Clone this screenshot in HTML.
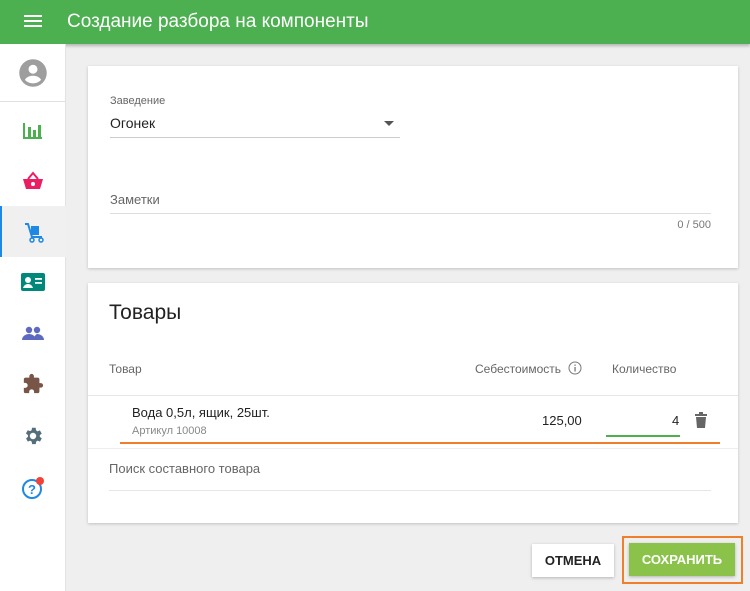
<!DOCTYPE html>
<html><head><meta charset="utf-8"><style>
*{box-sizing:border-box;margin:0;padding:0}
body{width:750px;height:591px;overflow:hidden;background:#efefef;font-family:"Liberation Sans",sans-serif;position:relative;color:#222}
.hdr{position:absolute;left:0;top:0;width:750px;height:44px;background:#4caf50;box-shadow:0 2px 3px rgba(0,0,0,.25)}
.hdr .t{position:absolute;left:67px;top:11px;color:#fff;font-size:19px}
.side{position:absolute;left:0;top:44px;width:66px;height:547px;background:#fff;border-right:1px solid #e2e2e2}
.ic{position:absolute;left:0;width:66px;display:flex;justify-content:center;align-items:center}
.card{position:absolute;left:88px;width:650px;background:#fff;box-shadow:0 1px 3px rgba(0,0,0,.2)}
.abs{position:absolute}
.s{font-size:13px;color:#666}
</style></head><body>
<div class="hdr">
<svg class="abs" style="left:24px;top:14px" width="18" height="14"><rect y="1" width="18" height="2" fill="#fff"/><rect y="6" width="18" height="2" fill="#fff"/><rect y="11" width="18" height="2" fill="#fff"/></svg>
<div class="t">Создание разбора на компоненты</div></div>
<div class="side">
<div class="ic" style="top:0;height:58px;border-bottom:1px solid #e0e0e0"><svg width="30" height="30" viewBox="0 0 24 24"><circle cx="12" cy="12" r="11" fill="#9e9e9e"/><circle cx="12" cy="9" r="3.6" fill="#fff"/><path d="M5.5 17.5c1.5-2.5 4-3.3 6.5-3.3s5 .8 6.5 3.3a9 9 0 0 1-13 0z" fill="#fff"/></svg></div>
<div class="ic" style="top:62px;height:48px"><svg width="20" height="18"><path d="M1 2v15h18" stroke="#4caf50" stroke-width="2" fill="none"/><rect x="5" y="6" width="3" height="10" fill="#4caf50"/><rect x="10" y="9" width="3" height="7" fill="#4caf50"/><rect x="15" y="4" width="3" height="12" fill="#4caf50"/></svg></div>
<div class="ic" style="top:113px;height:48px"><svg width="22" height="20" viewBox="0 0 22 20"><path d="M6 8l5-6 5 6" stroke="#e91e63" stroke-width="2" fill="none"/><path d="M1 8h20l-3 10H4z" fill="#e91e63"/><circle cx="11" cy="13" r="2" fill="#fff"/></svg></div>
<div class="ic" style="top:162px;height:51px;background:#f0f0f0;border-left:2px solid #1e88e5"><svg width="22" height="22" viewBox="0 0 22 22"><path d="M2 3h3l4 13h10" stroke="#1e88e5" stroke-width="2" fill="none"/><rect x="8" y="5" width="8" height="9" fill="#1e88e5"/><circle cx="9" cy="19" r="2" stroke="#1e88e5" fill="none" stroke-width="1.5"/><circle cx="18" cy="19" r="2" stroke="#1e88e5" fill="none" stroke-width="1.5"/></svg></div>
<div class="ic" style="top:214px;height:48px"><svg width="24" height="18"><rect width="24" height="18" rx="2" fill="#00897b"/><circle cx="7" cy="7" r="3" fill="#fff"/><path d="M2 15c1-3 3-4 5-4s4 1 5 4z" fill="#fff"/><rect x="14" y="5" width="7" height="1.8" fill="#fff"/><rect x="14" y="9" width="7" height="1.8" fill="#fff"/></svg></div>
<div class="ic" style="top:265px;height:48px"><svg width="22" height="14"><circle cx="7" cy="4" r="3.2" fill="#5c6bc0"/><circle cx="15" cy="4" r="3.2" fill="#5c6bc0"/><path d="M0 14c0-4 4-6 7-6s7 2 7 6z" fill="#5c6bc0"/><path d="M12 14c0-3 1-5 3-6 3 0 7 2 7 6z" fill="#5c6bc0"/></svg></div>
<div class="ic" style="top:316px;height:48px"><svg width="22" height="22" viewBox="0 0 24 24"><path d="M20.5 11H19V7a2 2 0 0 0-2-2h-4V3.5a2.5 2.5 0 0 0-5 0V5H4a2 2 0 0 0-2 2v3.8h1.5a2.7 2.7 0 0 1 0 5.4H2V20a2 2 0 0 0 2 2h3.8v-1.5a2.7 2.7 0 0 1 5.4 0V22H17a2 2 0 0 0 2-2v-4h1.5a2.5 2.5 0 0 0 0-5z" fill="#795548"/></svg></div>
<div class="ic" style="top:368px;height:48px"><svg width="22" height="22" viewBox="0 0 24 24"><path d="M19.4 13a7.5 7.5 0 0 0 0-2l2.1-1.6-2-3.5-2.5 1a7.3 7.3 0 0 0-1.7-1L14.9 3h-4l-.4 2.7a7.3 7.3 0 0 0-1.7 1l-2.5-1-2 3.5L6.5 11a7.5 7.5 0 0 0 0 2l-2.1 1.6 2 3.5 2.5-1c.5.4 1.1.7 1.7 1l.4 2.7h4l.4-2.7c.6-.3 1.2-.6 1.7-1l2.5 1 2-3.5zM12 15.5a3.5 3.5 0 1 1 0-7 3.5 3.5 0 0 1 0 7z" fill="#546e7a"/></svg></div>
<div class="ic" style="top:420px;height:48px"><svg width="26" height="26" viewBox="0 0 26 26"><circle cx="12" cy="14" r="9" stroke="#1e88e5" stroke-width="2" fill="none"/><text x="12" y="19" font-size="13" font-weight="bold" fill="#1e88e5" text-anchor="middle" font-family="Liberation Sans">?</text><circle cx="20" cy="6" r="4" fill="#f44336"/></svg></div>
</div>
<div class="card" style="top:66px;height:202px">
<div class="abs" style="left:22px;top:29px;font-size:11px;color:#666">Заведение</div>
<div class="abs" style="left:22px;top:49px;font-size:14px">Огонек</div>
<div class="abs" style="left:296px;top:55px;width:0;height:0;border-left:5px solid transparent;border-right:5px solid transparent;border-top:5px solid #555"></div>
<div class="abs" style="left:22px;top:71px;width:290px;height:1px;background:#ccc"></div>
<div class="abs s" style="left:22px;top:126px">Заметки</div>
<div class="abs" style="left:22px;top:147px;width:601px;height:1px;background:#ddd"></div>
<div class="abs" style="right:27px;top:153px;font-size:11px;color:#777">0 / 500</div>
</div>
<div class="card" style="top:283px;height:240px">
<div class="abs" style="left:21px;top:18px;font-size:21px;color:#222">Товары</div>
<div class="abs" style="left:21px;top:79px;font-size:12px;color:#666">Товар</div>
<div class="abs" style="left:387px;top:79px;font-size:12px;color:#666">Себестоимость</div>
<svg class="abs" style="left:480px;top:78px" width="14" height="14"><circle cx="7" cy="7" r="6" stroke="#777" fill="none"/><rect x="6.4" y="6" width="1.3" height="4.5" fill="#777"/><rect x="6.4" y="3.5" width="1.3" height="1.3" fill="#777"/></svg>
<div class="abs" style="left:524px;top:79px;font-size:12px;color:#666">Количество</div>
<div class="abs" style="left:0;top:112px;width:650px;height:1px;background:#e6e6e6"></div>
<div class="abs" style="left:44px;top:122px;font-size:13px">Вода 0,5л, ящик, 25шт.</div>
<div class="abs" style="left:44px;top:142px;font-size:11px;color:#888">Артикул 10008</div>
<div class="abs" style="left:454px;top:130px;font-size:13px">125,00</div>
<div class="abs" style="left:584px;top:130px;font-size:13px">4</div>
<div class="abs" style="left:518px;top:152px;width:74px;height:2px;background:#4caf50"></div>
<svg class="abs" style="left:607px;top:129px" width="12" height="16"><rect x="0" y="2" width="12" height="2" fill="#666"/><rect x="4" y="0" width="4" height="2" fill="#666"/><path d="M1 5h10l-1 11H2z" fill="#666"/></svg>
<div class="abs" style="left:32px;top:159px;width:600px;height:2px;background:#ef7f2b"></div>
<div class="abs" style="left:0;top:165px;width:650px;height:1px;background:#eee"></div>
<div class="abs s" style="left:21px;top:178px">Поиск составного товара</div>
<div class="abs" style="left:21px;top:207px;width:602px;height:1px;background:#e6e6e6"></div>
</div>
<div class="abs" style="left:532px;top:544px;width:82px;height:33px;background:#fff;box-shadow:0 1px 3px rgba(0,0,0,.25);font-size:13px;font-weight:bold;display:flex;align-items:center;justify-content:center;color:#222">ОТМЕНА</div>
<div class="abs" style="left:622px;top:536px;width:121px;height:48px;border:2px solid #ef7f2b"></div>
<div class="abs" style="left:629px;top:543px;width:106px;height:33px;background:#8bc34a;box-shadow:0 1px 3px rgba(0,0,0,.25);font-size:13px;font-weight:bold;color:#fff;display:flex;align-items:center;justify-content:center">СОХРАНИТЬ</div>
</body></html>
